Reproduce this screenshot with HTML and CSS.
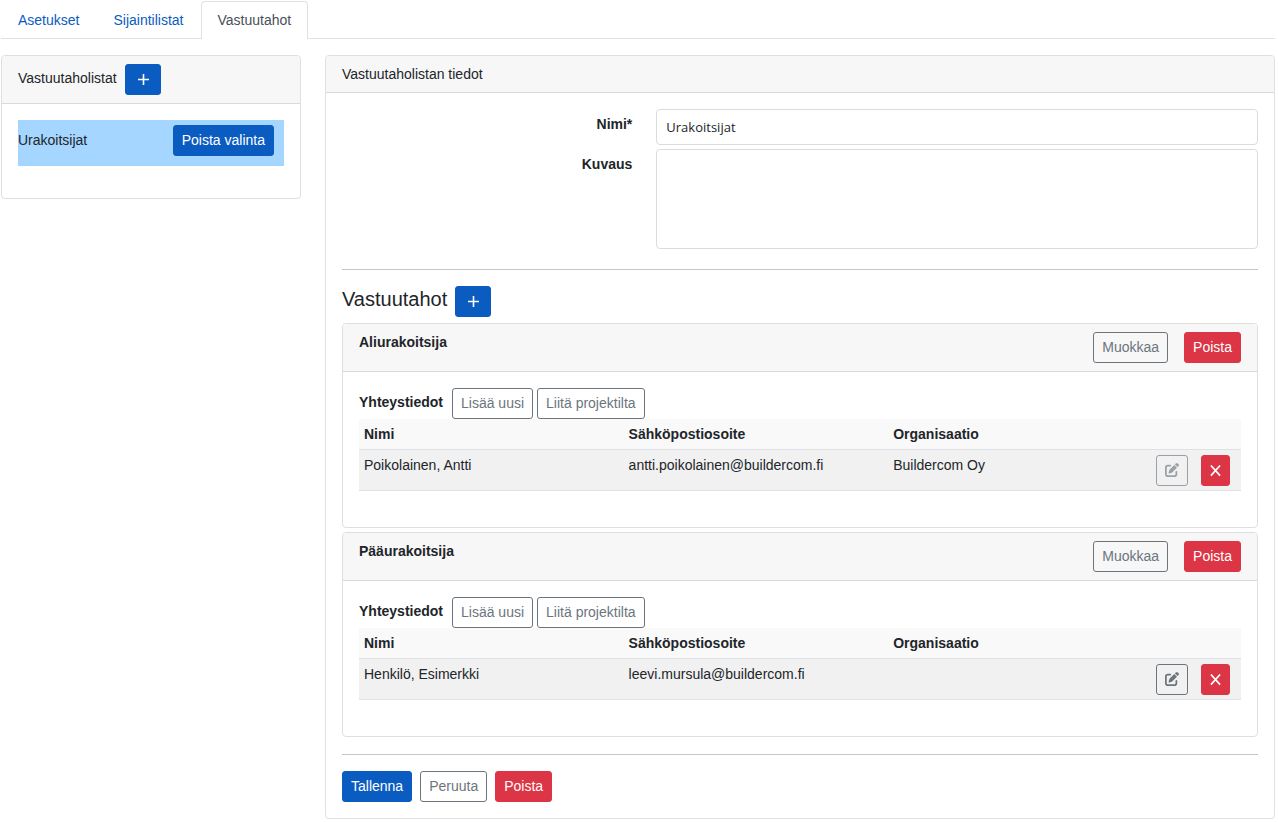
FILE: index.html
```html
<!DOCTYPE html>
<html lang="fi">
<head>
  <meta charset="UTF-8" />
  <meta name="viewport" content="width=device-width, initial-scale=1.0"/>
  <title>Vastuutahot</title>
  <link rel="stylesheet" href="styles.css">
</head>
<body>

  <svg class="sprite" aria-hidden="true">
    <symbol id="icon-plus" viewBox="0 0 12 12">
      <path d="M6.5 0v11M1 5.5h11" fill="none" stroke="currentColor" stroke-width="1.6"/>
    </symbol>
    <symbol id="icon-x" viewBox="0 0 12 12">
      <path d="M1 0l10 11M11 0L1 11" fill="none" stroke="currentColor" stroke-width="1.8"/>
    </symbol>
    <symbol id="icon-edit" viewBox="0 0 512 512">
      <path fill="currentColor" d="M471.6 21.7c-21.9-21.9-57.3-21.9-79.2 0L362.3 51.7l97.9 97.9 30.1-30.1c21.9-21.9 21.9-57.3 0-79.2L471.6 21.7zm-299.2 220c-6.1 6.1-10.8 13.6-13.5 21.9l-29.6 88.8c-2.9 8.6-.6 18.1 5.8 24.6s15.9 8.7 24.6 5.8l88.8-29.6c8.2-2.7 15.7-7.4 21.9-13.5L437.7 172.3 339.7 74.3 172.4 241.7zM96 64C43 64 0 107 0 160V416c0 53 43 96 96 96H352c53 0 96-43 96-96V320c0-17.7-14.3-32-32-32s-32 14.3-32 32v96c0 17.7-14.3 32-32 32H96c-17.7 0-32-14.3-32-32V160c0-17.7 14.3-32 32-32h96c17.7 0 32-14.3 32-32s-14.3-32-32-32H96z"/>
    </symbol>
  </svg>

  <nav class="tabs">
    <a class="tab" href="#asetukset">Asetukset</a>
    <a class="tab" href="#sijaintilistat">Sijaintilistat</a>
    <a class="tab active" href="#vastuutahot" aria-current="page">Vastuutahot</a>
  </nav>

  <main class="layout">
    <aside class="card sidebar">
      <div class="card-header title-row">
        <span>Vastuutaholistat</span>
        <button type="button" class="btn btn-primary btn-plus" aria-label="Lisää lista"><svg class="icon"><use href="#icon-plus"/></svg></button>
      </div>
      <div class="card-body">
        <div class="list-item selected">
          <span>Urakoitsijat</span>
          <button type="button" class="btn btn-primary">Poista valinta</button>
        </div>
      </div>
    </aside>

    <form class="card details">
      <div class="card-header">Vastuutaholistan tiedot</div>
      <div class="card-body">
        <div class="form-grid">
          <label for="nimi">Nimi*</label>
          <input type="text" id="nimi" value="Urakoitsijat" />
          <label for="kuvaus">Kuvaus</label>
          <textarea id="kuvaus"></textarea>
        </div>

        <hr>

        <div class="title-row section-title">
          <h5>Vastuutahot</h5>
          <button type="button" class="btn btn-primary btn-plus" aria-label="Lisää vastuutaho"><svg class="icon"><use href="#icon-plus"/></svg></button>
        </div>

        <div class="parties">
          <section class="card">
            <div class="card-header party-header">
              <strong>Aliurakoitsija</strong>
              <div class="party-actions">
                <button type="button" class="btn btn-outline">Muokkaa</button>
                <button type="button" class="btn btn-danger">Poista</button>
              </div>
            </div>
            <div class="card-body">
              <div class="contacts-row">
                <strong>Yhteystiedot</strong>
                <button type="button" class="btn btn-outline">Lisää uusi</button>
                <button type="button" class="btn btn-outline">Liitä projektilta</button>
              </div>
              <table class="contacts">
                <thead>
                  <tr><th>Nimi</th><th>Sähköpostiosoite</th><th>Organisaatio</th><th></th></tr>
                </thead>
                <tbody>
                  <tr>
                    <td>Poikolainen, Antti</td>
                    <td>antti.poikolainen@buildercom.fi</td>
                    <td>Buildercom Oy</td>
                    <td>
                      <div class="row-actions">
                        <button type="button" class="btn btn-outline" aria-label="Muokkaa" disabled><svg class="icon icon-edit"><use href="#icon-edit"/></svg></button>
                        <button type="button" class="btn btn-danger" aria-label="Poista"><svg class="icon icon-x"><use href="#icon-x"/></svg></button>
                      </div>
                    </td>
                  </tr>
                </tbody>
              </table>
            </div>
          </section>

          <section class="card">
            <div class="card-header party-header">
              <strong>Pääurakoitsija</strong>
              <div class="party-actions">
                <button type="button" class="btn btn-outline">Muokkaa</button>
                <button type="button" class="btn btn-danger">Poista</button>
              </div>
            </div>
            <div class="card-body">
              <div class="contacts-row">
                <strong>Yhteystiedot</strong>
                <button type="button" class="btn btn-outline">Lisää uusi</button>
                <button type="button" class="btn btn-outline">Liitä projektilta</button>
              </div>
              <table class="contacts">
                <thead>
                  <tr><th>Nimi</th><th>Sähköpostiosoite</th><th>Organisaatio</th><th></th></tr>
                </thead>
                <tbody>
                  <tr>
                    <td>Henkilö, Esimerkki</td>
                    <td>leevi.mursula@buildercom.fi</td>
                    <td></td>
                    <td>
                      <div class="row-actions">
                        <button type="button" class="btn btn-outline" aria-label="Muokkaa"><svg class="icon icon-edit"><use href="#icon-edit"/></svg></button>
                        <button type="button" class="btn btn-danger" aria-label="Poista"><svg class="icon icon-x"><use href="#icon-x"/></svg></button>
                      </div>
                    </td>
                  </tr>
                </tbody>
              </table>
            </div>
          </section>
        </div>

        <hr>

        <div class="form-actions">
          <button type="submit" class="btn btn-primary">Tallenna</button>
          <button type="button" class="btn btn-outline">Peruuta</button>
          <button type="button" class="btn btn-danger">Poista</button>
        </div>
      </div>
    </form>
  </main>

</body>
</html>
```

FILE: styles.css
```css
* {
  box-sizing: border-box;
}

body {
  margin: 0;
  padding: 1px 3px 3px 1px;
  font-family: "Liberation Sans", Arial, sans-serif;
  font-size: 14px;
  line-height: 20px;
  color: #212529;
  background: #fff;
}

.sprite {
  display: none;
}

/* tabs */
.tabs {
  display: flex;
  border-bottom: 1px solid #dee2e6;
}

.tab {
  padding: 8px 16px;
  border: 1px solid transparent;
  border-bottom: none;
  border-radius: 4px 4px 0 0;
  color: #0b5cc1;
  text-decoration: none;
}

.tab.active {
  margin-bottom: -1px;
  padding-bottom: 9px;
  border-color: #dee2e6;
  background: #fff;
  color: #495057;
}

/* layout */
.layout {
  display: flex;
  align-items: flex-start;
  gap: 24px;
  margin-top: 16px;
}

.sidebar {
  flex: 0 0 300px;
}

.details {
  flex: 1;
  min-width: 0;
}

.card {
  border: 1px solid #dfdfdf;
  border-radius: 4px;
  background: #fff;
}

.card-header {
  padding: 8px 16px;
  border-bottom: 1px solid #dadada;
  border-radius: 3px 3px 0 0;
  background: #f7f7f7;
}

.card-body {
  padding: 16px;
}

.title-row {
  display: flex;
  align-items: flex-start;
  gap: 8px;
  line-height: 28px;
}

.list-item {
  display: flex;
  justify-content: space-between;
  margin-bottom: 16px;
  padding: 5px 10px 10px 0;
  line-height: 31px;
}

.list-item.selected {
  background: #a5d6ff;
}

/* buttons */
.btn {
  display: inline-flex;
  align-items: center;
  justify-content: center;
  height: 31px;
  padding: 4px 8px;
  border: 1px solid transparent;
  border-radius: 3px;
  font-family: inherit;
  font-size: 14px;
  line-height: 21px;
  cursor: pointer;
}

.btn-primary {
  background: #0b5cc1;
  border-color: #0b5cc1;
  color: #fff;
}

.btn-outline {
  background: transparent;
  border-color: #6c757d;
  color: #6c757d;
}

.btn-danger {
  background: #dc3545;
  border-color: #dc3545;
  color: #fff;
}

.btn:disabled {
  opacity: 0.65;
  cursor: default;
}

.btn-plus {
  width: 36px;
}

.icon {
  width: 12px;
  height: 12px;
}

.icon-edit {
  width: 14px;
  height: 14px;
  margin-bottom: 1px;
}

.icon-x {
  width: 11px;
}

/* form */
.form-grid {
  display: grid;
  grid-template-columns: calc(33.333% - 15px) 1fr;
  column-gap: 24px;
  row-gap: 4px;
}

.form-grid label {
  padding-top: 5px;
  font-weight: bold;
  text-align: right;
}

.form-grid input,
.form-grid textarea {
  display: block;
  width: 100%;
  height: 36px;
  padding: 6px 9px;
  border: 1px solid #dbdcde;
  border-radius: 4px;
  font-family: "Open Sans", "Noto Sans", sans-serif;
  font-size: 13px;
  color: #212529;
  background: #fff;
}

.form-grid textarea {
  height: 100px;
  resize: none;
}

hr {
  margin: 16px 0;
  border: none;
  border-top: 1px solid #c7c8c9;
}

.form-grid + hr {
  margin-top: 20px;
}

/* vastuutahot */
.section-title {
  margin-bottom: 6px;
}

h5 {
  margin: 0;
  font-size: 20px;
  font-weight: normal;
  line-height: 26px;
}

.parties {
  display: grid;
  gap: 4px;
  padding-bottom: 1px;
}

.party-header {
  display: flex;
  justify-content: space-between;
}

.party-actions {
  display: flex;
  gap: 16px;
}

.contacts-row {
  display: flex;
  gap: 4px;
  line-height: 28px;
}

.contacts-row strong {
  margin-right: 5px;
}

.contacts {
  width: 100%;
  margin-bottom: 20px;
  border-collapse: separate;
  border-spacing: 0;
  table-layout: fixed;
}

.contacts th,
.contacts td {
  width: 30%;
  padding: 5px;
  border-bottom: 1px solid #dee2e6;
  text-align: left;
  vertical-align: top;
  background: #f9f9f9;
}

.contacts td {
  padding-bottom: 4px;
  background: #f1f1f1;
}

.contacts th:last-child,
.contacts td:last-child {
  width: 10%;
  padding-left: 0;
  padding-right: 11px;
}

.row-actions {
  display: flex;
  justify-content: flex-end;
  gap: 13px;
}

.form-actions {
  display: flex;
  gap: 8px;
}
```
